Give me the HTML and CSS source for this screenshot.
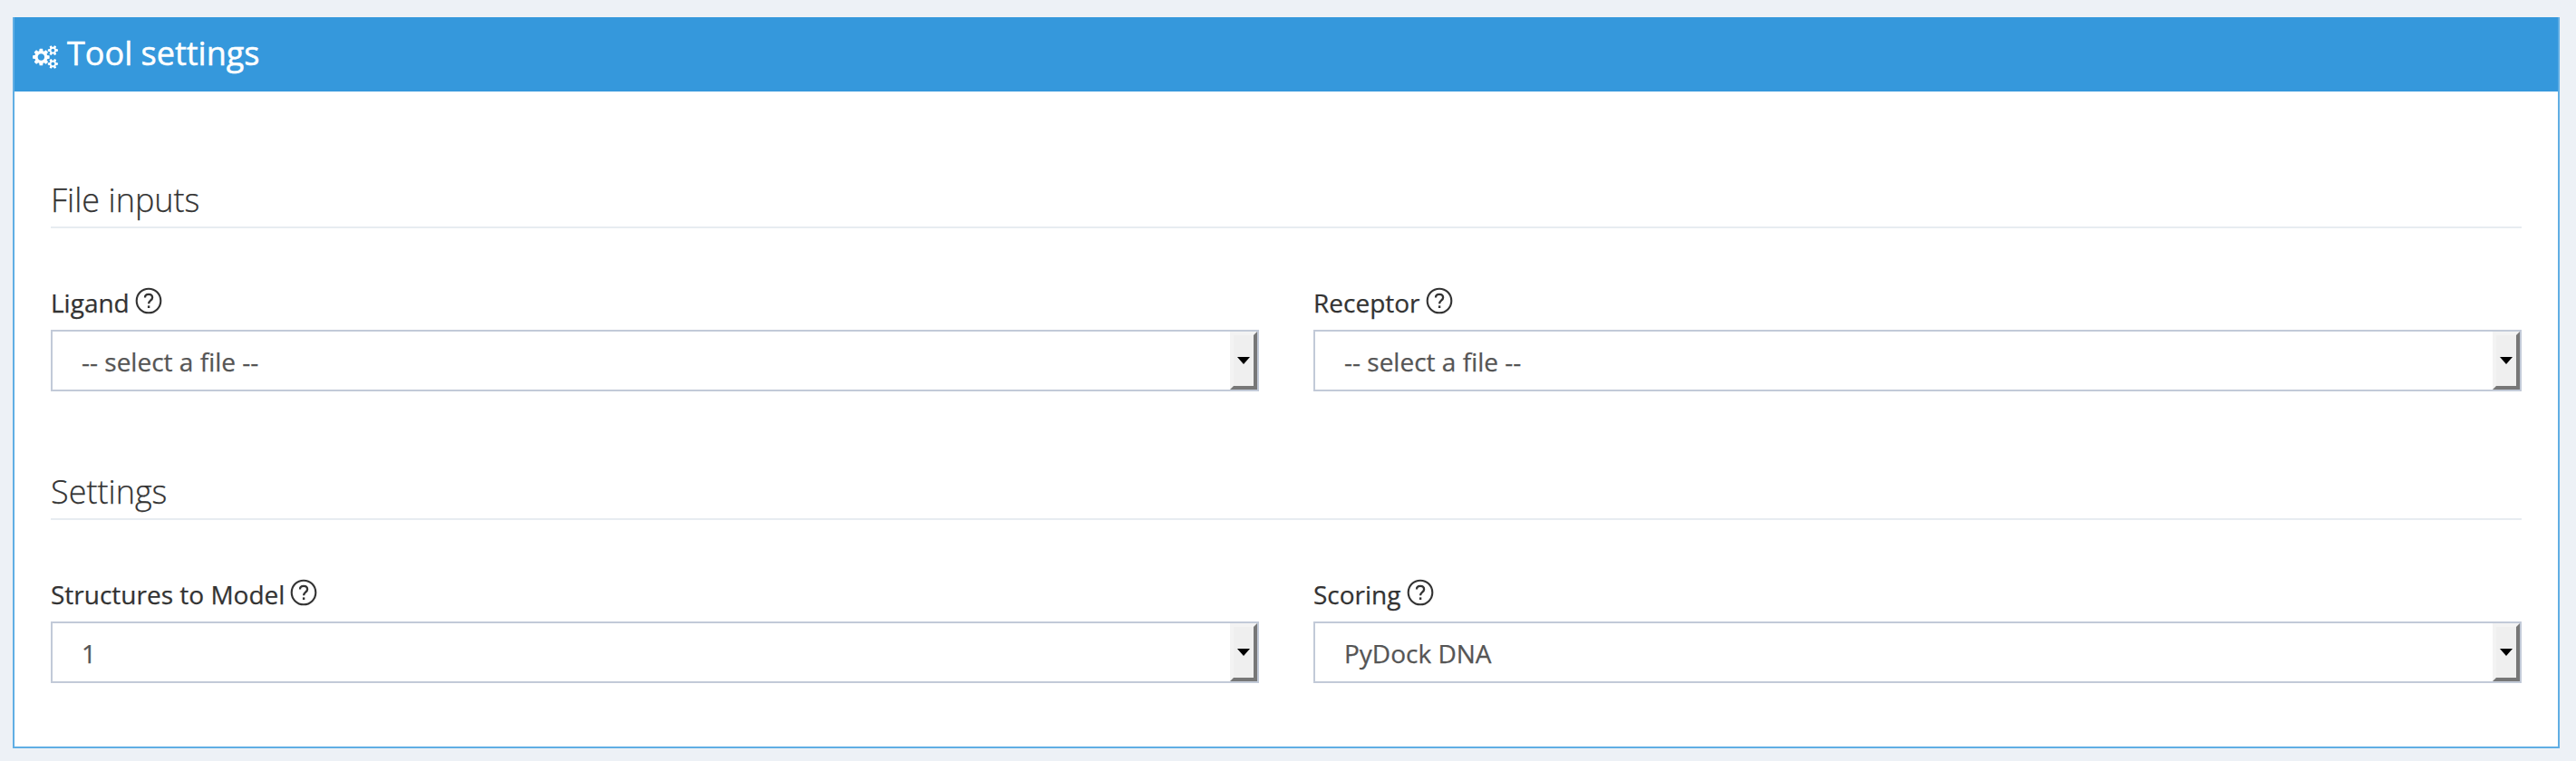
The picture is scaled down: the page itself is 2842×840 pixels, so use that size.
FILE: index.html
```html
<!DOCTYPE html>
<html lang="en">
<head>
<meta charset="utf-8">
<title>Tool settings</title>
<link rel="stylesheet" href="styles.css">
</head>
<body>
<svg width="0" height="0" class="defs">
  <symbol id="help" viewBox="0 0 30 30">
    <circle cx="15" cy="15" r="13.3" fill="none" stroke="currentColor" stroke-width="2.100"/>
    <path d="M11 11.4C11 9 12.8 7.9 15 7.9s4.100 1.300 4.100 3.600c0 3.200-4 3.300-4 6.700" fill="none" stroke="currentColor" stroke-width="2.300"/>
    <rect x="13.900" y="20.400" width="2.400" height="2.600" fill="currentColor"/>
  </symbol>
</svg>
<main class="panel">
  <header class="panel-header">
    <svg class="cogs" viewBox="0 0 1920 1792"><path fill="currentColor" d="M896 896q0-106-75-181t-181-75-181 75-75 181 75 181 181 75 181-75 75-181zm768 512q0-52-38-90t-90-38-90 38-38 90q0 53 37.500 90.500t90.500 37.500 90.500-37.500 37.500-90.500zm0-1024q0-52-38-90t-90-38-90 38-38 90q0 53 37.500 90.500t90.500 37.500 90.500-37.500 37.500-90.500zm-384 421v185q0 10-7 19.500t-16 10.500l-155 24q-11 35-32 76 34 48 90 115 7 11 7 20 0 12-7 19-23 30-82.500 89.500t-78.500 59.500q-11 0-21-7l-115-90q-37 19-77 31-11 108-23 155-7 24-30 24h-186q-11 0-20-7.500t-10-17.500l-23-153q-34-10-75-31l-118 89q-7 7-20 7-11 0-21-8-144-133-144-160 0-9 7-19 10-14 41-53t47-61q-23-44-35-82l-152-24q-10-1-17-9.500t-7-19.500v-185q0-10 7-19.500t16-10.500l155-24q11-35 32-76-34-48-90-115-7-11-7-20 0-12 7-20 22-30 82-89t79-59q11 0 21 7l115 90q34-18 77-32 11-108 23-154 7-24 30-24h186q11 0 20 7.500t10 17.500l23 153q34 10 75 31l118-89q8-7 20-7 11 0 21 8 144 133 144 160 0 8-7 19-12 16-42 54t-45 60q23 48 34 82l152 23q10 2 17 10.500t7 19.500zm640 533v140q0 16-149 31-12 27-30 52 51 113 51 138 0 4-4 7-122 71-124 71-8 0-46-47t-52-68q-20 2-30 2t-30-2q-14 21-52 68t-46 47q-2 0-124-71-4-3-4-7 0-25 51-138-18-25-30-52-149-15-149-31v-140q0-16 149-31 13-29 30-52-51-113-51-138 0-4 4-7 4-2 35-20t59-34 30-16q8 0 46 46.500t52 67.500q20-2 30-2t30 2q51-71 92-112l6-2q4 0 124 70 4 3 4 7 0 25-51 138 17 23 30 52 149 15 149 31zm0-1024v140q0 16-149 31-12 27-30 52 51 113 51 138 0 4-4 7-122 71-124 71-8 0-46-47t-52-68q-20 2-30 2t-30-2q-14 21-52 68t-46 47q-2 0-124-71-4-3-4-7 0-25 51-138-18-25-30-52-149-15-149-31v-140q0-16 149-31 13-29 30-52-51-113-51-138 0-4 4-7 4-2 35-20t59-34 30-16q8 0 46 46.500t52 67.500q20-2 30-2t30 2q51-71 92-112l6-2q4 0 124 70 4 3 4 7 0 25-51 138 17 23 30 52 149 15 149 31z"/></svg>
    <h1 class="panel-title">Tool settings</h1>
  </header>
  <div class="panel-body">
    <section class="group">
      <h2 class="group-title">File inputs</h2>
      <div class="fields">
        <div class="field">
          <div class="label"><span>Ligand</span><svg class="help"><use href="#help"/></svg></div>
          <div class="select"><span class="value">-- select a file --</span><span class="arrow"><svg class="caret" viewBox="0 0 14 8"><path d="M0 0h14L7 8z"/></svg></span></div>
        </div>
        <div class="field">
          <div class="label"><span>Receptor</span><svg class="help"><use href="#help"/></svg></div>
          <div class="select"><span class="value">-- select a file --</span><span class="arrow"><svg class="caret" viewBox="0 0 14 8"><path d="M0 0h14L7 8z"/></svg></span></div>
        </div>
      </div>
    </section>
    <section class="group">
      <h2 class="group-title">Settings</h2>
      <div class="fields">
        <div class="field">
          <div class="label"><span>Structures to Model</span><svg class="help"><use href="#help"/></svg></div>
          <div class="select"><span class="value">1</span><span class="arrow"><svg class="caret" viewBox="0 0 14 8"><path d="M0 0h14L7 8z"/></svg></span></div>
        </div>
        <div class="field">
          <div class="label"><span>Scoring</span><svg class="help"><use href="#help"/></svg></div>
          <div class="select"><span class="value">PyDock DNA</span><span class="arrow"><svg class="caret" viewBox="0 0 14 8"><path d="M0 0h14L7 8z"/></svg></span></div>
        </div>
      </div>
    </section>
  </div>
</main>
</body>
</html>
```
FILE: styles.css
```css
* { box-sizing: border-box; }
body {
  margin: 0;
  height: 840px;
  padding: 19px 18px 14px 14px;
  overflow: hidden;
  background: #edf1f6;
  color: #333;
  font-family: "Open Sans", sans-serif;
  -webkit-text-stroke: 0.25px currentColor;
}
.defs { display: none; }
.panel {
  height: 807px;
  border: 2px solid #60aee4;
  border-top: 0;
  background: #fff;
}
.panel-header {
  display: flex;
  align-items: center;
  height: 82px;
  padding-left: 20px;
  background: #3598dc;
  color: #fff;
}
.cogs {
  width: 28px;
  height: 26px;
  margin: 6px 10px 0 0;
}
.panel-title {
  margin: 0 0 2px;
  font-size: 36px;
  font-weight: 400;
  line-height: 50px;
  -webkit-text-stroke-width: 0.5px;
}
.panel-body { padding: 93px 40px 0; }
.group { height: 322px; }
.group-title {
  height: 58px;
  margin: 0 0 62px;
  border-bottom: 2px solid #e7ecf1;
  font-size: 36px;
  font-weight: 300;
  line-height: 54px;
}
.fields {
  display: grid;
  grid-template-columns: 1fr 1fr;
  column-gap: 60px;
}
.label {
  display: flex;
  height: 50px;
  font-size: 28px;
  line-height: 40px;
}
.help {
  width: 30px;
  height: 30px;
  margin: 3px 0 0 6px;
  -webkit-text-stroke-width: 0;
}
.select {
  display: flex;
  justify-content: space-between;
  height: 68px;
  border: 2px solid #c2cad8;
  color: #555;
  font-size: 28px;
  line-height: 62px;
}
.value { padding: 2px 0 0 32px; }
.arrow {
  display: flex;
  align-items: center;
  justify-content: center;
  width: 30px;
  height: 64px;
  border: 4px solid;
  border-color: #f3f3f3 #777 #777 #f3f3f3;
  background: #efefef;
}
.caret {
  width: 14px;
  height: 8px;
}
```
